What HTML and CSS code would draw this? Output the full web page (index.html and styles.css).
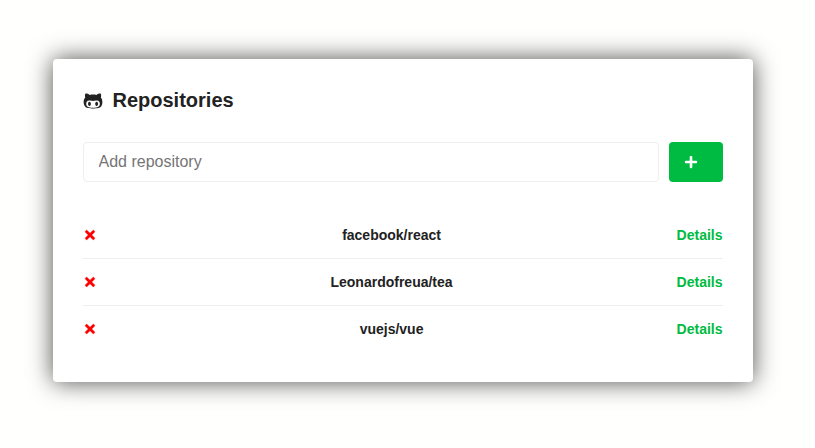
FILE: index.html
```html
<!DOCTYPE html>
<html lang="en">
<head>
<meta charset="utf-8">
<title>Repositories</title>
<link rel="stylesheet" href="styles.css">
</head>
<body>
<svg class="sprite" aria-hidden="true">
  <symbol id="times" viewBox="0 0 352 512"><path d="M242.72 256l100.07-100.07c12.28-12.28 12.28-32.19 0-44.48l-22.24-22.24c-12.28-12.28-32.19-12.28-44.48 0L176 189.28 75.93 89.21c-12.28-12.28-32.19-12.28-44.48 0L9.21 111.45c-12.28 12.28-12.28 32.19 0 44.48L109.28 256 9.21 356.07c-12.28 12.28-12.28 32.19 0 44.48l22.24 22.24c12.28 12.28 32.2 12.28 44.48 0L176 322.72l100.07 100.07c12.28 12.28 32.2 12.28 44.48 0l22.24-22.24c12.28-12.28 12.28-32.19 0-44.48L242.72 256z"/></symbol>
</svg>
<main class="card">
  <h1 class="title">
    <svg class="logo" viewBox="0 0 480 512"><path d="M186.1 328.7c0 20.9-10.9 55.1-36.7 55.1s-36.7-34.2-36.7-55.1 10.9-55.1 36.7-55.1 36.7 34.2 36.7 55.1zM480 278.2c0 31.9-3.2 65.7-17.5 95-37.9 76.6-142.1 74.8-216.7 74.8-75.8 0-186.2 2.7-225.6-74.8-14.6-29-20.2-63.1-20.2-95 0-41.9 13.9-81.5 41.5-113.6-5.2-15.8-7.7-32.4-7.7-48.8 0-21.5 4.9-32.3 14.6-51.8 45.3 0 74.3 9 108.8 36 29-6.9 58.8-10 88.7-10 27 0 54.2 2.9 80.4 9.2 34-26.7 63-35.2 107.8-35.2 9.8 19.5 14.6 30.3 14.6 51.8 0 16.4-2.6 32.7-7.7 48.2 27.5 32.4 39 72.3 39 114.2zm-64.3 50.5c0-43.9-26.7-82.6-73.5-82.6-18.9 0-37 3.4-56 6-14.9 2.3-29.8 3.2-45.1 3.2-15.2 0-30.1-.9-45.1-3.2-18.7-2.6-37-6-56-6-46.8 0-73.5 38.7-73.5 82.6 0 87.8 80.4 101.3 150.4 101.3h48.2c70.3 0 150.6-13.4 150.6-101.3zm-82.6-55.1c-25.8 0-36.7 34.2-36.7 55.1s10.9 55.1 36.7 55.1 36.7-34.2 36.7-55.1-10.9-55.1-36.7-55.1z"/></svg>
    Repositories
  </h1>
  <form class="form">
    <input class="field" type="text" placeholder="Add repository">
    <button class="add" type="button" aria-label="Add">
      <svg class="icon" viewBox="0 0 448 512"><path d="M416 208H272V64c0-17.67-14.33-32-32-32h-32c-17.67 0-32 14.33-32 32v144H32c-17.67 0-32 14.33-32 32v32c0 17.67 14.33 32 32 32h144v144c0 17.67 14.33 32 32 32h32c17.67 0 32-14.33 32-32V304h144c17.67 0 32-14.33 32-32v-32c0-17.67-14.33-32-32-32z"/></svg>
    </button>
  </form>
  <ul class="list">
    <li class="row"><svg class="icon remove"><use href="#times"/></svg><span>facebook/react</span><a class="details">Details</a></li>
    <li class="row"><svg class="icon remove"><use href="#times"/></svg><span>Leonardofreua/tea</span><a class="details">Details</a></li>
    <li class="row"><svg class="icon remove"><use href="#times"/></svg><span>vuejs/vue</span><a class="details">Details</a></li>
  </ul>
</main>
</body>
</html>
```
FILE: styles.css
```css
* { box-sizing: border-box; margin: 0; padding: 0; }
body {
  min-height: 448px;
  padding: 59px 0 0 52.5px;
  background: #fffffe;
  color: #222;
  font: 14px "Liberation Sans", Arial, sans-serif;
}
.sprite { display: none; }
.card {
  width: 700px;
  padding: 30px;
  background: #fff;
  border-radius: 4px;
  box-shadow: 0 0 25px rgba(0, 0, 0, 0.7);
}
.title {
  display: flex;
  align-items: center;
  height: 23px;
  font-size: 20px;
  line-height: 23px;
}
.logo { width: 20px; height: 20px; margin-right: 10px; fill: currentColor; }
.form { display: flex; gap: 10px; margin-top: 30px; }
.field {
  flex: 1;
  height: 40px;
  padding: 0 15px;
  border: 1px solid #eee;
  border-radius: 4px;
  background: #fff;
  font: 16px "Liberation Sans", Arial, sans-serif;
}
.field::placeholder { color: #757575; }
.add {
  display: flex;
  align-items: center;
  padding: 0 15px;
  border: 0;
  border-radius: 4px;
  background: #00bb42;
  color: #fff;
}
.icon { width: 14px; height: 14px; margin-right: 10px; fill: currentColor; }
.list { margin-top: 30px; list-style: none; }
.row {
  display: flex;
  align-items: center;
  justify-content: space-between;
  height: 46px;
  font-weight: bold;
}
.row + .row { height: 47px; border-top: 1px solid #eee; }
.remove { color: #f00; stroke: currentColor; stroke-width: 12; }
.details { color: #00bb42; }
```
